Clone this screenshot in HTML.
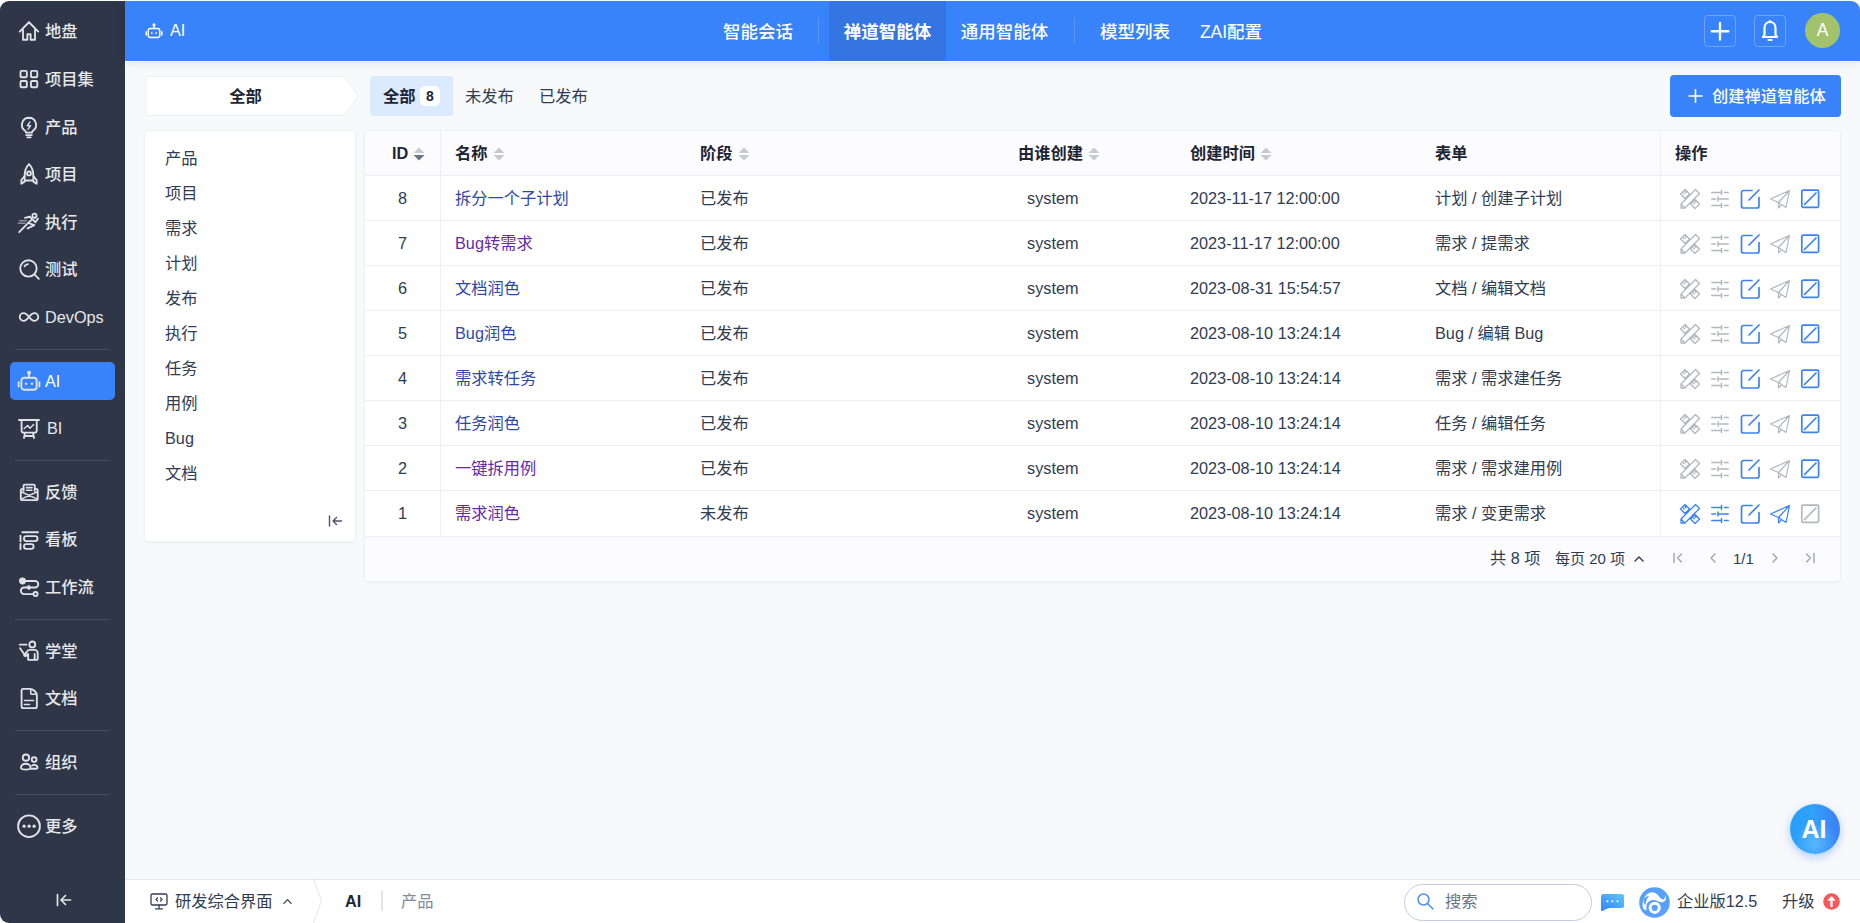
<!DOCTYPE html>
<html lang="zh-CN">
<head>
<meta charset="utf-8">
<title>AI</title>
<style>
*{box-sizing:border-box;margin:0;padding:0}
html,body{width:1860px;height:923px;overflow:hidden;background:#fff}
body{font-family:"Liberation Sans","Noto Sans CJK SC",sans-serif;color:#313c52;font-size:16.25px;position:relative}
svg{display:block}
#side{position:absolute;left:0;top:1px;width:125px;height:922px;background:#2f3648;border-radius:9px 0 0 9px}
.mi{position:absolute;left:10px;width:105px;height:38px;border-radius:5px;color:#e6e8ec;font-size:16.25px;font-weight:500}
.mi svg{position:absolute;left:7px;top:6px;width:24px;height:24px;fill:none;stroke:#e0e2e7;stroke-width:1.7;stroke-linecap:round;stroke-linejoin:round}
.mi span{position:absolute;left:35px;top:-1px;line-height:38px;white-space:nowrap}
.mi.en span{font-weight:normal}
.mi.act{color:#fff;background:#3883fa;margin-top:-1px}.mi.act span{margin-top:1px}.mi.act svg{margin-top:1px}
.dv{position:absolute;left:15px;width:95px;height:1px;background:#444c5f}
#head{position:absolute;left:125px;top:1px;width:1735px;height:60px;background:#3883fa;border-radius:0 9px 0 0;box-shadow:0 1px 0 #fff,0 2px 12px rgba(0,0,0,.10);z-index:2}
.nav{position:absolute;top:0;height:60px;line-height:62px;color:#fff;font-size:17.500px;font-weight:500;white-space:nowrap;text-align:center}
.nav.act{background:#3575e2;font-weight:bold}
.nd{position:absolute;top:17px;width:1px;height:25px;background:#5b98f8}
.hb{position:absolute;top:14px;width:32px;height:32px;border:1px solid #6ea4f9;border-radius:4px}
#main{position:absolute;left:125px;top:61px;width:1735px;height:818px;background:#f8f9fb}
#foot{position:absolute;left:125px;top:879px;width:1735px;height:44px;background:#fff;border-top:1px solid #e6e8ee;border-radius:0 0 10px 0}
.abs{position:absolute;white-space:nowrap}
#lp{position:absolute;left:145px;top:131px;width:210px;height:410px;background:#fff;border-radius:3px;box-shadow:0 0 0 1px #eef0f4,0 1px 3px rgba(0,0,0,.08)}
#lp div{position:absolute;left:20px;font-size:16.25px;line-height:20px;color:#313c52}
#tb{position:absolute;left:365px;top:131px;width:1475px;height:450px;background:#fcfcfe;border-radius:3px;box-shadow:0 0 0 1px #eef0f4,0 1px 3px rgba(0,0,0,.08)}
.row{position:absolute;left:0;width:1475px;height:45px;border-top:1px solid #edeff3;background:#fff}
.row div,.th div{position:absolute;top:0;line-height:44px;white-space:nowrap;font-size:16.25px}
.th{position:absolute;left:0;top:0;width:1475px;height:44px;font-weight:bold;color:#1d2534}
.vl{position:absolute;top:0;width:1px;height:405px;background:#edeff3}
a{color:#2d48a8;text-decoration:none}
a.v{color:#652aa5}
</style>
</head>
<body>
<div id="side">
<div class="mi" style="top:12px"><svg viewBox="0 0 22 22"><path d="M2.5 11.5 11 3l8.5 8.5M5.5 10v9h4v-5h3v5h4v-9"/></svg><span>地盘</span></div>
<div class="mi" style="top:60px"><svg viewBox="0 0 22 22"><rect x="3.200" y="3.600" width="5.800" height="5.800" rx="1"/><rect x="12.800" y="3.600" width="5.800" height="5.800" rx="1"/><rect x="3.200" y="12.800" width="5.800" height="5.800" rx="1"/><rect x="12.800" y="12.800" width="5.800" height="5.800" rx="1"/></svg><span>项目集</span></div>
<div class="mi" style="top:108px"><svg viewBox="0 0 22 22"><path d="M11 2.5a6.5 6.5 0 0 0-3.6 11.9c.6.5.9 1 .9 1.800h5.400c0-.8.300-1.300.9-1.800A6.500 6.500 0 0 0 11 2.500z"/><path d="M8.500 18.500h5M9.500 20.500h3"/><path d="M11.800 6.500 9.500 9.800h3L10.200 13" stroke-width="1.300"/></svg><span>产品</span></div>
<div class="mi" style="top:155px"><svg viewBox="0 0 22 22"><path d="M11 2c3 3 4 6.500 4 10.500V17H7v-4.500C7 8.500 8 5 11 2z"/><circle cx="11" cy="10.500" r="1.800"/><path d="M7 13l-3 3.500V20l3-2M15 13l3 3.500V20l-3-2"/></svg><span>项目</span></div>
<div class="mi" style="top:203px"><svg viewBox="0 0 22 22"><circle cx="16" cy="5.200" r="1.900"/><path d="M7.300 7.200l4.500-1 2.300 2.400-4 3.300 5.800 1.900-6.200 3.100M9.200 13 2 20.300M15.100 9.300l1.800 2 2.300-3.400"/><path d="M2.300 9.800h6.500M1.300 12.100h6" stroke="#8a8f9c" stroke-width="1.400"/></svg><span>执行</span></div>
<div class="mi" style="top:250px"><svg viewBox="0 0 22 22"><circle cx="10.500" cy="10.500" r="7.500"/><path d="M16 16l4 4M7 8.500a4 4 0 0 1 3-2"/></svg><span>测试</span></div>
<div class="mi en" style="top:298px"><svg viewBox="0 0 22 22"><path d="M11 11c-1.800-2.300-3-3.500-5-3.500a3.500 3.500 0 0 0 0 7c2 0 3.200-1.200 5-3.500zm0 0c1.800 2.300 3 3.500 5 3.500a3.500 3.500 0 0 0 0-7c-2 0-3.200 1.200-5 3.500z"/></svg><span>DevOps</span></div>
<div class="mi en act" style="top:362px"><svg viewBox="0 0 22 22"><rect x="4" y="8" width="14" height="11" rx="2.500"/><path d="M11 8V4.500M1.500 12v4M20.500 12v4"/><circle cx="11" cy="3.500" r="1" fill="#e0e2e7"/><circle cx="8.300" cy="13.500" r="1.100" fill="#e0e2e7" stroke="none"/><circle cx="13.700" cy="13.500" r="1.100" fill="#e0e2e7" stroke="none"/></svg><span>AI</span></div>
<div class="mi en" style="top:409px"><svg viewBox="0 0 22 22"><path d="M1.800 3.700h18.400M4.200 3.700v9.600a2 2 0 0 0 2 2h9.900a2 2 0 0 0 2-2V3.700M7.300 15.600l-.9 4.600M14.700 15.600l.9 4.600M6.900 18.300h8.200"/><path d="M6.600 11.500l3.200-2.800 2 2.500 3.500-3.500" stroke-width="1.300"/></svg><span style="left:37px">BI</span></div>
<div class="mi" style="top:473px"><svg viewBox="0 0 22 22"><path d="M6 10V5.200a1 1 0 0 1 1-1h8.300a1 1 0 0 1 1 1V10"/><path d="M8.700 7h5M8.700 9.400h5" stroke-width="1.400"/><path d="M6 8.100H5a1.500 1.500 0 0 0-1.500 1.500v7.300a1.500 1.500 0 0 0 1.500 1.500h12.500a1.500 1.500 0 0 0 1.500-1.500V9.600a1.500 1.500 0 0 0-1.500-1.500h-1.200"/><path d="M4.300 11l13.500 6M18.200 11 4.700 17" stroke-width="1.300"/></svg><span>反馈</span></div>
<div class="mi" style="top:520px"><svg viewBox="0 0 22 22"><path d="M4.800 4.800h14.500M3.200 8v5.200M3.200 15.500v4.800"/><rect x="6.400" y="8.300" width="12.400" height="4.600" rx="2.200"/><rect x="6.400" y="15.700" width="8.800" height="4.300" rx="2.100"/></svg><span>看板</span></div>
<div class="mi" style="top:568px"><svg viewBox="0 0 22 22"><circle cx="5" cy="5.500" r="2.300" fill="#e0e2e7"/><path d="M5 5.500h11.500a3 3 0 0 1 0 6H6.500a3 3 0 0 0 0 6H15"/><circle cx="17" cy="17.500" r="1.900"/><path d="M10.900 9.300l2.200 2.200-2.200 2.200-2.200-2.200z" fill="#e0e2e7" stroke-width=".5"/></svg><span>工作流</span></div>
<div class="mi" style="top:632px"><svg viewBox="0 0 22 22"><circle cx="14" cy="5" r="2.700"/><path d="M2.500 5.200h6.200"/><path d="M2.800 8.400l4.200 6c1.500-1.500 2.200-4.400 4.500-4.400h4.500a3 3 0 0 1 3 3v5a1.200 1.200 0 0 1-1.200 1.200H16.200v-5.500M16.200 19.100H10.200v-5.500l-1.700 1.700a1.500 1.500 0 0 1-2-.2"/></svg><span>学堂</span></div>
<div class="mi" style="top:679px"><svg viewBox="0 0 22 22"><path d="M5.700 2.700h5.800c3.500 0 6.700 3 6.700 6V18.800a1.500 1.500 0 0 1-1.500 1.500H5.700a1.500 1.500 0 0 1-1.500-1.500V4.200a1.500 1.500 0 0 1 1.500-1.500z"/><path d="M12.600 3v3.600a1 1 0 0 0 1 1h4M6.800 13.300h8.400M6.800 16.900h4.800" stroke-width="1.400"/></svg><span>文档</span></div>
<div class="mi" style="top:743px"><svg viewBox="0 0 22 22"><circle cx="8.200" cy="7" r="2.900"/><circle cx="15.700" cy="8.800" r="2.200"/><path d="M3.600 16.300c0-2.300 2-3.700 4.400-3.700s4.400 1.400 4.400 3.700c0 1.300-2.200 1.700-4.400 1.700s-4.400-.4-4.400-1.700z"/><path d="M13.800 14.200c.5-.3 1.200-.5 1.900-.5 1.800 0 3.100 1 3.100 2.500 0 .8-1.200 1-2.800 1h-3"/></svg><span>组织</span></div>
<div class="mi" style="top:807px"><svg viewBox="0 0 22 22"><circle cx="11" cy="11.200" r="10"/><circle cx="6.500" cy="11.200" r="1.500" fill="#e0e2e7" stroke="none"/><circle cx="11.100" cy="11.200" r="1.500" fill="#e0e2e7" stroke="none"/><circle cx="15.700" cy="11.200" r="1.500" fill="#e0e2e7" stroke="none"/></svg><span>更多</span></div>
<div class="dv" style="top:348px"></div>
<div class="dv" style="top:459px"></div>
<div class="dv" style="top:618px"></div>
<div class="dv" style="top:729px"></div>
<div class="dv" style="top:793px"></div>
<svg class="abs" style="left:55.500px;top:892px" width="16" height="14" viewBox="0 0 16 14" fill="none" stroke="#dfe2e8" stroke-width="1.700" stroke-linecap="round" stroke-linejoin="round"><path d="M1.500 1.500v11M14.500 7H5.500M9.500 2.500 5 7l4.500 4.500"/></svg></div>
<div id="head"><svg class="abs" style="left:20px;top:21px" width="18" height="18" viewBox="0 0 22 22" fill="none" stroke="#fff" stroke-width="1.800" stroke-linecap="round" stroke-linejoin="round"><rect x="4" y="8" width="14" height="11" rx="2.500"/><path d="M11 8V4.500M1.500 12v4M20.500 12v4"/><circle cx="11" cy="3.500" r="1" fill="#fff"/><circle cx="8.300" cy="13.500" r="1.100" fill="#fff" stroke="none"/><circle cx="13.700" cy="13.500" r="1.100" fill="#fff" stroke="none"/></svg><div class="abs" style="left:45px;top:-1px;line-height:60px;color:#fff;font-size:16.25px">AI</div><div class="nav" style="left:584px;width:98px">智能会话</div><div class="nav act" style="left:704px;width:117px">禅道智能体</div><div class="nav" style="left:821px;width:117px">通用智能体</div><div class="nav" style="left:961px;width:98px">模型列表</div><div class="nav" style="left:1059px;width:94px">ZAI配置</div><div class="nd" style="left:693px"></div><div class="nd" style="left:949px"></div><div class="hb" style="left:1579px"><svg width="30" height="30" viewBox="0 0 30 30" stroke="#fff" stroke-width="2.400" stroke-linecap="round"><path d="M15 7v16.500M6.800 15.200h16.500"/></svg></div><div class="hb" style="left:1629px"><svg width="30" height="30" viewBox="0.500 0.500 30 30" fill="none" stroke="#fff" stroke-width="2.200" stroke-linecap="round" stroke-linejoin="round"><path d="M15.500 6.500c-3.300 0-5.500 2.500-5.500 6v7l-1.500 2h14l-1.500-2v-7c0-3.500-2.200-6-5.500-6zM14 24.500h3M15.500 5.500v1"/></svg></div><div class="abs" style="left:1680px;top:12px;width:35px;height:35px;border-radius:18px;background:#a3c26c;color:#fff;font-size:17.500px;text-align:center;line-height:35px">A</div></div>
<div id="main"></div>
<svg class="abs" style="left:145px;top:76px" width="216" height="40" viewBox="0 0 216 40"><path d="M0.500 2.500a2 2 0 0 1 2-2H199.500l14 19.500L199.500 39.500H2.500a2 2 0 0 1-2-2z" fill="#fff" stroke="#eceef2" stroke-width="1"/></svg><div class="abs" style="left:145px;top:77px;width:201px;height:38px;line-height:38px;text-align:center;font-weight:bold;color:#1d2534;font-size:16.25px">全部</div><div class="abs" style="left:370px;top:76px;width:83px;height:40px;border-radius:3px;background:#dbeafe"></div><div class="abs" style="left:383px;top:76px;line-height:40px;font-weight:bold;color:#1d2534">全部</div><div class="abs" style="left:420px;top:86px;width:20px;height:20px;border-radius:5px;background:#fff;text-align:center;line-height:20px;font-size:14px;font-weight:bold;color:#1d2534">8</div><div class="abs" style="left:465px;top:76px;line-height:40px;color:#313c52">未发布</div><div class="abs" style="left:539px;top:76px;line-height:40px;color:#313c52">已发布</div><div class="abs" style="left:1670px;top:75px;width:171px;height:42px;border-radius:4px;background:#3883fa"></div><svg class="abs" style="left:1688px;top:89px" width="15" height="14" viewBox="0 0 15 14" stroke="#fff" stroke-width="1.600" stroke-linecap="round"><path d="M7.500 0.800v12.400M1 7h13"/></svg><div class="abs" style="left:1712px;top:75px;line-height:42px;color:#fff;font-size:16.25px;font-weight:500">创建禅道智能体</div><div id="lp"><div style="top:17px">产品</div><div style="top:52px">项目</div><div style="top:87px">需求</div><div style="top:122px">计划</div><div style="top:157px">发布</div><div style="top:192px">执行</div><div style="top:227px">任务</div><div style="top:262px">用例</div><div style="top:297px">Bug</div><div style="top:332px">文档</div><svg class="abs" style="left:183px;top:384px" width="15" height="12" viewBox="0 0 15 12" fill="none" stroke="#4a5568" stroke-width="1.400" stroke-linecap="round" stroke-linejoin="round"><path d="M1.500 1v10M13.500 6H5M8.500 2.500 5 6l3.500 3.500"/></svg></div><div id="tb"><div class="th"><div style="left:27px">ID</div><svg class="abs" style="left:48px;top:16px" width="12" height="14" viewBox="0 0 12 14"><path d="M6 0.500 11.500 6H0.500z" fill="#c8cad1"/><path d="M6 13.500 11.500 8H0.500z" fill="#6b7280"/></svg><div style="left:90px">名称</div><svg class="abs" style="left:128px;top:16px" width="12" height="14" viewBox="0 0 12 14"><path d="M6 0.500 11.500 6H0.500z" fill="#c8cad1"/><path d="M6 13.500 11.500 8H0.500z" fill="#c8cad1"/></svg><div style="left:335px">阶段</div><svg class="abs" style="left:373px;top:16px" width="12" height="14" viewBox="0 0 12 14"><path d="M6 0.500 11.500 6H0.500z" fill="#c8cad1"/><path d="M6 13.500 11.500 8H0.500z" fill="#c8cad1"/></svg><div style="left:653px">由谁创建</div><svg class="abs" style="left:723px;top:16px" width="12" height="14" viewBox="0 0 12 14"><path d="M6 0.500 11.500 6H0.500z" fill="#c8cad1"/><path d="M6 13.500 11.500 8H0.500z" fill="#c8cad1"/></svg><div style="left:825px">创建时间</div><svg class="abs" style="left:895px;top:16px" width="12" height="14" viewBox="0 0 12 14"><path d="M6 0.500 11.500 6H0.500z" fill="#c8cad1"/><path d="M6 13.500 11.500 8H0.500z" fill="#c8cad1"/></svg><div style="left:1070px">表单</div><div style="left:1310px">操作</div></div><div class="row" style="top:44px"><div style="left:0;width:75px;text-align:center">8</div><div style="left:90px"><a class="">拆分一个子计划</a></div><div style="left:335px">已发布</div><div style="left:662px">system</div><div style="left:825px">2023-11-17 12:00:00</div><div style="left:1070px">计划 / 创建子计划</div><svg class="abs" style="left:1314px;top:12px" width="22" height="22" viewBox="0 0 22 22" fill="none" stroke="#b4b7bf" stroke-width="1.300" stroke-linejoin="round"><path d="M16.500 1.500 20.500 5.500 6 20H2v-4zM2 16l4 4M6 1.500 1.500 6 6 10.500 10.500 6zM16 11.500 11.500 16 16 20.500 20.500 16zM4.200 4.800l1.500 1.500M5.800 3.200l1.500 1.500M14.200 14.800l1.500 1.500M15.800 13.200l1.500 1.500"/></svg><svg class="abs" style="left:1344px;top:12px" width="22" height="22" viewBox="0 0 22 22" fill="none" stroke="#b4b7bf" stroke-width="1.500" stroke-linecap="round"><path d="M2.800 4.500h8.700M15.500 4.500h3.700M12.500 2.500v4M2.800 11h3.700M10 11h9.200M9 9v4M2.800 17.500h8.700M15.500 17.500h3.700M12.500 15.500v4"/></svg><svg class="abs" style="left:1374px;top:12px" width="22" height="22" viewBox="0 0 22 22" fill="none" stroke="#3b82f6" stroke-width="1.700" stroke-linecap="round" stroke-linejoin="round"><path d="M13 2.500H4.500a2 2 0 0 0-2 2V18a2 2 0 0 0 2 2H18a2 2 0 0 0 2-2V9.500M20 2 10 12"/></svg><svg class="abs" style="left:1404px;top:12px" width="22" height="22" viewBox="0 0 22 22" fill="none" stroke="#b4b7bf" stroke-width="1.200" stroke-linejoin="round"><path d="M20.500 2.500 1.500 11l8 3.500zM20.500 2.500 17 19.500 9.500 14.500zM9.500 14.500v5.500l3-3.500"/></svg><svg class="abs" style="left:1434px;top:12px" width="22" height="22" viewBox="0 0 22 22" fill="none" stroke="#3b82f6" stroke-width="1.700" stroke-linecap="round" stroke-linejoin="round"><rect x="2.800" y="2.200" width="16.800" height="17.200" rx="1.300"/><path d="M17 5 5.500 16.500"/></svg></div><div class="row" style="top:89px"><div style="left:0;width:75px;text-align:center">7</div><div style="left:90px"><a class="v">Bug转需求</a></div><div style="left:335px">已发布</div><div style="left:662px">system</div><div style="left:825px">2023-11-17 12:00:00</div><div style="left:1070px">需求 / 提需求</div><svg class="abs" style="left:1314px;top:12px" width="22" height="22" viewBox="0 0 22 22" fill="none" stroke="#b4b7bf" stroke-width="1.300" stroke-linejoin="round"><path d="M16.500 1.500 20.500 5.500 6 20H2v-4zM2 16l4 4M6 1.500 1.500 6 6 10.500 10.500 6zM16 11.500 11.500 16 16 20.500 20.500 16zM4.200 4.800l1.500 1.500M5.800 3.200l1.500 1.500M14.200 14.800l1.500 1.500M15.800 13.200l1.500 1.500"/></svg><svg class="abs" style="left:1344px;top:12px" width="22" height="22" viewBox="0 0 22 22" fill="none" stroke="#b4b7bf" stroke-width="1.500" stroke-linecap="round"><path d="M2.800 4.500h8.700M15.500 4.500h3.700M12.500 2.500v4M2.800 11h3.700M10 11h9.200M9 9v4M2.800 17.500h8.700M15.500 17.500h3.700M12.500 15.500v4"/></svg><svg class="abs" style="left:1374px;top:12px" width="22" height="22" viewBox="0 0 22 22" fill="none" stroke="#3b82f6" stroke-width="1.700" stroke-linecap="round" stroke-linejoin="round"><path d="M13 2.500H4.500a2 2 0 0 0-2 2V18a2 2 0 0 0 2 2H18a2 2 0 0 0 2-2V9.500M20 2 10 12"/></svg><svg class="abs" style="left:1404px;top:12px" width="22" height="22" viewBox="0 0 22 22" fill="none" stroke="#b4b7bf" stroke-width="1.200" stroke-linejoin="round"><path d="M20.500 2.500 1.500 11l8 3.500zM20.500 2.500 17 19.500 9.500 14.500zM9.500 14.500v5.500l3-3.500"/></svg><svg class="abs" style="left:1434px;top:12px" width="22" height="22" viewBox="0 0 22 22" fill="none" stroke="#3b82f6" stroke-width="1.700" stroke-linecap="round" stroke-linejoin="round"><rect x="2.800" y="2.200" width="16.800" height="17.200" rx="1.300"/><path d="M17 5 5.500 16.500"/></svg></div><div class="row" style="top:134px"><div style="left:0;width:75px;text-align:center">6</div><div style="left:90px"><a class="">文档润色</a></div><div style="left:335px">已发布</div><div style="left:662px">system</div><div style="left:825px">2023-08-31 15:54:57</div><div style="left:1070px">文档 / 编辑文档</div><svg class="abs" style="left:1314px;top:12px" width="22" height="22" viewBox="0 0 22 22" fill="none" stroke="#b4b7bf" stroke-width="1.300" stroke-linejoin="round"><path d="M16.500 1.500 20.500 5.500 6 20H2v-4zM2 16l4 4M6 1.500 1.500 6 6 10.500 10.500 6zM16 11.500 11.500 16 16 20.500 20.500 16zM4.200 4.800l1.500 1.500M5.800 3.200l1.500 1.500M14.200 14.800l1.500 1.500M15.800 13.200l1.500 1.500"/></svg><svg class="abs" style="left:1344px;top:12px" width="22" height="22" viewBox="0 0 22 22" fill="none" stroke="#b4b7bf" stroke-width="1.500" stroke-linecap="round"><path d="M2.800 4.500h8.700M15.500 4.500h3.700M12.500 2.500v4M2.800 11h3.700M10 11h9.200M9 9v4M2.800 17.500h8.700M15.500 17.500h3.700M12.500 15.500v4"/></svg><svg class="abs" style="left:1374px;top:12px" width="22" height="22" viewBox="0 0 22 22" fill="none" stroke="#3b82f6" stroke-width="1.700" stroke-linecap="round" stroke-linejoin="round"><path d="M13 2.500H4.500a2 2 0 0 0-2 2V18a2 2 0 0 0 2 2H18a2 2 0 0 0 2-2V9.500M20 2 10 12"/></svg><svg class="abs" style="left:1404px;top:12px" width="22" height="22" viewBox="0 0 22 22" fill="none" stroke="#b4b7bf" stroke-width="1.200" stroke-linejoin="round"><path d="M20.500 2.500 1.500 11l8 3.500zM20.500 2.500 17 19.500 9.500 14.500zM9.500 14.500v5.500l3-3.500"/></svg><svg class="abs" style="left:1434px;top:12px" width="22" height="22" viewBox="0 0 22 22" fill="none" stroke="#3b82f6" stroke-width="1.700" stroke-linecap="round" stroke-linejoin="round"><rect x="2.800" y="2.200" width="16.800" height="17.200" rx="1.300"/><path d="M17 5 5.500 16.500"/></svg></div><div class="row" style="top:179px"><div style="left:0;width:75px;text-align:center">5</div><div style="left:90px"><a class="">Bug润色</a></div><div style="left:335px">已发布</div><div style="left:662px">system</div><div style="left:825px">2023-08-10 13:24:14</div><div style="left:1070px">Bug / 编辑 Bug</div><svg class="abs" style="left:1314px;top:12px" width="22" height="22" viewBox="0 0 22 22" fill="none" stroke="#b4b7bf" stroke-width="1.300" stroke-linejoin="round"><path d="M16.500 1.500 20.500 5.500 6 20H2v-4zM2 16l4 4M6 1.500 1.500 6 6 10.500 10.500 6zM16 11.500 11.500 16 16 20.500 20.500 16zM4.200 4.800l1.500 1.500M5.800 3.200l1.500 1.500M14.200 14.800l1.500 1.500M15.800 13.200l1.500 1.500"/></svg><svg class="abs" style="left:1344px;top:12px" width="22" height="22" viewBox="0 0 22 22" fill="none" stroke="#b4b7bf" stroke-width="1.500" stroke-linecap="round"><path d="M2.800 4.500h8.700M15.500 4.500h3.700M12.500 2.500v4M2.800 11h3.700M10 11h9.200M9 9v4M2.800 17.500h8.700M15.500 17.500h3.700M12.500 15.500v4"/></svg><svg class="abs" style="left:1374px;top:12px" width="22" height="22" viewBox="0 0 22 22" fill="none" stroke="#3b82f6" stroke-width="1.700" stroke-linecap="round" stroke-linejoin="round"><path d="M13 2.500H4.500a2 2 0 0 0-2 2V18a2 2 0 0 0 2 2H18a2 2 0 0 0 2-2V9.500M20 2 10 12"/></svg><svg class="abs" style="left:1404px;top:12px" width="22" height="22" viewBox="0 0 22 22" fill="none" stroke="#b4b7bf" stroke-width="1.200" stroke-linejoin="round"><path d="M20.500 2.500 1.500 11l8 3.500zM20.500 2.500 17 19.500 9.500 14.500zM9.500 14.500v5.500l3-3.500"/></svg><svg class="abs" style="left:1434px;top:12px" width="22" height="22" viewBox="0 0 22 22" fill="none" stroke="#3b82f6" stroke-width="1.700" stroke-linecap="round" stroke-linejoin="round"><rect x="2.800" y="2.200" width="16.800" height="17.200" rx="1.300"/><path d="M17 5 5.500 16.500"/></svg></div><div class="row" style="top:224px"><div style="left:0;width:75px;text-align:center">4</div><div style="left:90px"><a class="">需求转任务</a></div><div style="left:335px">已发布</div><div style="left:662px">system</div><div style="left:825px">2023-08-10 13:24:14</div><div style="left:1070px">需求 / 需求建任务</div><svg class="abs" style="left:1314px;top:12px" width="22" height="22" viewBox="0 0 22 22" fill="none" stroke="#b4b7bf" stroke-width="1.300" stroke-linejoin="round"><path d="M16.500 1.500 20.500 5.500 6 20H2v-4zM2 16l4 4M6 1.500 1.500 6 6 10.500 10.500 6zM16 11.500 11.500 16 16 20.500 20.500 16zM4.200 4.800l1.500 1.500M5.800 3.200l1.500 1.500M14.200 14.800l1.500 1.500M15.800 13.200l1.500 1.500"/></svg><svg class="abs" style="left:1344px;top:12px" width="22" height="22" viewBox="0 0 22 22" fill="none" stroke="#b4b7bf" stroke-width="1.500" stroke-linecap="round"><path d="M2.800 4.500h8.700M15.500 4.500h3.700M12.500 2.500v4M2.800 11h3.700M10 11h9.200M9 9v4M2.800 17.500h8.700M15.500 17.500h3.700M12.500 15.500v4"/></svg><svg class="abs" style="left:1374px;top:12px" width="22" height="22" viewBox="0 0 22 22" fill="none" stroke="#3b82f6" stroke-width="1.700" stroke-linecap="round" stroke-linejoin="round"><path d="M13 2.500H4.500a2 2 0 0 0-2 2V18a2 2 0 0 0 2 2H18a2 2 0 0 0 2-2V9.500M20 2 10 12"/></svg><svg class="abs" style="left:1404px;top:12px" width="22" height="22" viewBox="0 0 22 22" fill="none" stroke="#b4b7bf" stroke-width="1.200" stroke-linejoin="round"><path d="M20.500 2.500 1.500 11l8 3.500zM20.500 2.500 17 19.500 9.500 14.500zM9.500 14.500v5.500l3-3.500"/></svg><svg class="abs" style="left:1434px;top:12px" width="22" height="22" viewBox="0 0 22 22" fill="none" stroke="#3b82f6" stroke-width="1.700" stroke-linecap="round" stroke-linejoin="round"><rect x="2.800" y="2.200" width="16.800" height="17.200" rx="1.300"/><path d="M17 5 5.500 16.500"/></svg></div><div class="row" style="top:269px"><div style="left:0;width:75px;text-align:center">3</div><div style="left:90px"><a class="">任务润色</a></div><div style="left:335px">已发布</div><div style="left:662px">system</div><div style="left:825px">2023-08-10 13:24:14</div><div style="left:1070px">任务 / 编辑任务</div><svg class="abs" style="left:1314px;top:12px" width="22" height="22" viewBox="0 0 22 22" fill="none" stroke="#b4b7bf" stroke-width="1.300" stroke-linejoin="round"><path d="M16.500 1.500 20.500 5.500 6 20H2v-4zM2 16l4 4M6 1.500 1.500 6 6 10.500 10.500 6zM16 11.500 11.500 16 16 20.500 20.500 16zM4.200 4.800l1.500 1.500M5.800 3.200l1.500 1.500M14.200 14.800l1.500 1.500M15.800 13.200l1.500 1.500"/></svg><svg class="abs" style="left:1344px;top:12px" width="22" height="22" viewBox="0 0 22 22" fill="none" stroke="#b4b7bf" stroke-width="1.500" stroke-linecap="round"><path d="M2.800 4.500h8.700M15.500 4.500h3.700M12.500 2.500v4M2.800 11h3.700M10 11h9.200M9 9v4M2.800 17.500h8.700M15.500 17.500h3.700M12.500 15.500v4"/></svg><svg class="abs" style="left:1374px;top:12px" width="22" height="22" viewBox="0 0 22 22" fill="none" stroke="#3b82f6" stroke-width="1.700" stroke-linecap="round" stroke-linejoin="round"><path d="M13 2.500H4.500a2 2 0 0 0-2 2V18a2 2 0 0 0 2 2H18a2 2 0 0 0 2-2V9.500M20 2 10 12"/></svg><svg class="abs" style="left:1404px;top:12px" width="22" height="22" viewBox="0 0 22 22" fill="none" stroke="#b4b7bf" stroke-width="1.200" stroke-linejoin="round"><path d="M20.500 2.500 1.500 11l8 3.500zM20.500 2.500 17 19.500 9.500 14.500zM9.500 14.500v5.500l3-3.500"/></svg><svg class="abs" style="left:1434px;top:12px" width="22" height="22" viewBox="0 0 22 22" fill="none" stroke="#3b82f6" stroke-width="1.700" stroke-linecap="round" stroke-linejoin="round"><rect x="2.800" y="2.200" width="16.800" height="17.200" rx="1.300"/><path d="M17 5 5.500 16.500"/></svg></div><div class="row" style="top:314px"><div style="left:0;width:75px;text-align:center">2</div><div style="left:90px"><a class="v">一键拆用例</a></div><div style="left:335px">已发布</div><div style="left:662px">system</div><div style="left:825px">2023-08-10 13:24:14</div><div style="left:1070px">需求 / 需求建用例</div><svg class="abs" style="left:1314px;top:12px" width="22" height="22" viewBox="0 0 22 22" fill="none" stroke="#b4b7bf" stroke-width="1.300" stroke-linejoin="round"><path d="M16.500 1.500 20.500 5.500 6 20H2v-4zM2 16l4 4M6 1.500 1.500 6 6 10.500 10.500 6zM16 11.500 11.500 16 16 20.500 20.500 16zM4.200 4.800l1.500 1.500M5.800 3.200l1.500 1.500M14.200 14.800l1.500 1.500M15.800 13.200l1.500 1.500"/></svg><svg class="abs" style="left:1344px;top:12px" width="22" height="22" viewBox="0 0 22 22" fill="none" stroke="#b4b7bf" stroke-width="1.500" stroke-linecap="round"><path d="M2.800 4.500h8.700M15.500 4.500h3.700M12.500 2.500v4M2.800 11h3.700M10 11h9.200M9 9v4M2.800 17.500h8.700M15.500 17.500h3.700M12.500 15.500v4"/></svg><svg class="abs" style="left:1374px;top:12px" width="22" height="22" viewBox="0 0 22 22" fill="none" stroke="#3b82f6" stroke-width="1.700" stroke-linecap="round" stroke-linejoin="round"><path d="M13 2.500H4.500a2 2 0 0 0-2 2V18a2 2 0 0 0 2 2H18a2 2 0 0 0 2-2V9.500M20 2 10 12"/></svg><svg class="abs" style="left:1404px;top:12px" width="22" height="22" viewBox="0 0 22 22" fill="none" stroke="#b4b7bf" stroke-width="1.200" stroke-linejoin="round"><path d="M20.500 2.500 1.500 11l8 3.500zM20.500 2.500 17 19.500 9.500 14.500zM9.500 14.500v5.500l3-3.500"/></svg><svg class="abs" style="left:1434px;top:12px" width="22" height="22" viewBox="0 0 22 22" fill="none" stroke="#3b82f6" stroke-width="1.700" stroke-linecap="round" stroke-linejoin="round"><rect x="2.800" y="2.200" width="16.800" height="17.200" rx="1.300"/><path d="M17 5 5.500 16.500"/></svg></div><div class="row" style="top:359px;height:46px"><div style="left:0;width:75px;text-align:center">1</div><div style="left:90px"><a class="v">需求润色</a></div><div style="left:335px">未发布</div><div style="left:662px">system</div><div style="left:825px">2023-08-10 13:24:14</div><div style="left:1070px">需求 / 变更需求</div><svg class="abs" style="left:1314px;top:12px" width="22" height="22" viewBox="0 0 22 22" fill="none" stroke="#3b82f6" stroke-width="1.300" stroke-linejoin="round"><path d="M16.500 1.500 20.500 5.500 6 20H2v-4zM2 16l4 4M6 1.500 1.500 6 6 10.500 10.500 6zM16 11.500 11.500 16 16 20.500 20.500 16zM4.200 4.800l1.500 1.500M5.800 3.200l1.500 1.500M14.200 14.800l1.500 1.500M15.800 13.200l1.500 1.500"/></svg><svg class="abs" style="left:1344px;top:12px" width="22" height="22" viewBox="0 0 22 22" fill="none" stroke="#3b82f6" stroke-width="1.500" stroke-linecap="round"><path d="M2.800 4.500h8.700M15.500 4.500h3.700M12.500 2.500v4M2.800 11h3.700M10 11h9.200M9 9v4M2.800 17.500h8.700M15.500 17.500h3.700M12.500 15.500v4"/></svg><svg class="abs" style="left:1374px;top:12px" width="22" height="22" viewBox="0 0 22 22" fill="none" stroke="#3b82f6" stroke-width="1.700" stroke-linecap="round" stroke-linejoin="round"><path d="M13 2.500H4.500a2 2 0 0 0-2 2V18a2 2 0 0 0 2 2H18a2 2 0 0 0 2-2V9.500M20 2 10 12"/></svg><svg class="abs" style="left:1404px;top:12px" width="22" height="22" viewBox="0 0 22 22" fill="none" stroke="#3b82f6" stroke-width="1.200" stroke-linejoin="round"><path d="M20.500 2.500 1.500 11l8 3.500zM20.500 2.500 17 19.500 9.500 14.500zM9.500 14.500v5.500l3-3.500"/></svg><svg class="abs" style="left:1434px;top:12px" width="22" height="22" viewBox="0 0 22 22" fill="none" stroke="#b4b7bf" stroke-width="1.700" stroke-linecap="round" stroke-linejoin="round"><rect x="2.800" y="2.200" width="16.800" height="17.200" rx="1.300"/><path d="M17 5 5.500 16.500"/></svg></div><div class="row" style="top:405px;background:none"></div><div class="vl" style="left:75px"></div><div class="vl" style="left:1295px"></div><div class="abs" style="left:1125px;top:405px;line-height:45px;font-size:16.25px;color:#313c52">共 8 项</div><div class="abs" style="left:1190px;top:405px;line-height:45px;font-size:15px;color:#313c52">每页 20 项</div><svg class="abs" style="left:1268px;top:422px" width="12" height="12" viewBox="0 0 12 12" fill="none" stroke="#313c52" stroke-width="1.400" stroke-linecap="round" stroke-linejoin="round"><path d="M2 8 6 4l4 4"/></svg><svg class="abs" style="left:1307px;top:421px" width="12" height="12" viewBox="0 0 12 12" fill="none" stroke="#9ea3b0" stroke-width="1.400" stroke-linecap="round" stroke-linejoin="round"><path d="M2 1.500v9M9.500 2 5.500 6l4 4"/></svg><svg class="abs" style="left:1342px;top:421px" width="12" height="12" viewBox="0 0 12 12" fill="none" stroke="#9ea3b0" stroke-width="1.400" stroke-linecap="round" stroke-linejoin="round"><path d="M8 2 4 6l4 4"/></svg><div class="abs" style="left:1368px;top:405px;line-height:45px;font-size:15px;color:#313c52">1/1</div><svg class="abs" style="left:1404px;top:421px" width="12" height="12" viewBox="0 0 12 12" fill="none" stroke="#9ea3b0" stroke-width="1.400" stroke-linecap="round" stroke-linejoin="round"><path d="M4 2l4 4-4 4"/></svg><svg class="abs" style="left:1439px;top:421px" width="12" height="12" viewBox="0 0 12 12" fill="none" stroke="#9ea3b0" stroke-width="1.400" stroke-linecap="round" stroke-linejoin="round"><path d="M10 1.500v9M2.500 2l4 4-4 4"/></svg></div><div class="abs" style="left:1790px;top:804px;width:50px;height:50px;border-radius:25px;background:radial-gradient(circle at 50% 78%,rgba(88,182,253,.95) 0%,rgba(88,182,253,0) 48%),linear-gradient(90deg,#279efb 0%,#30a1fb 45%,#3d7ef8 100%);box-shadow:0 3px 10px rgba(59,130,246,.38);color:#fff;font-weight:bold;font-size:25px;line-height:51px;text-align:center;text-indent:-2px">AI</div>
<div id="foot"><svg class="abs" style="left:25px;top:13px" width="18" height="17" viewBox="0 0 18 17" fill="none" stroke="#313c52" stroke-width="1.300" stroke-linecap="round" stroke-linejoin="round"><rect x="1" y="1" width="16" height="11" rx="1.500"/><path d="M9 12v3.500M5.500 15.800h7M7.500 5 6 6.500 7.500 8M10.500 5 12 6.500 10.500 8"/></svg><div class="abs" style="left:50px;top:0;line-height:42px;font-size:16.25px;color:#313c52">研发综合界面</div><svg class="abs" style="left:157px;top:16px" width="11" height="11" viewBox="0 0 12 12" fill="none" stroke="#313c52" stroke-width="1.400" stroke-linecap="round" stroke-linejoin="round"><path d="M2 8 6 4l4 4"/></svg><svg class="abs" style="left:186px;top:-1px" width="14" height="44" viewBox="0 0 14 44" fill="none" stroke="#e3e5ea" stroke-width="1"><path d="M2.500 0 10.500 22 2.500 44"/></svg><div class="abs" style="left:220px;top:0;line-height:42px;font-size:16.25px;font-weight:bold;color:#1d2534">AI</div><div class="abs" style="left:256px;top:11px;width:2px;height:20px;background:#e3e5ea"></div><div class="abs" style="left:276px;top:0;line-height:42px;font-size:16.25px;color:#838a9d">产品</div><div class="abs" style="left:1279px;top:4px;width:188px;height:37px;border-radius:18.500px;border:1px solid #c5cbe2;background:#fff"></div><svg class="abs" style="left:1291px;top:12px" width="19" height="19" viewBox="0 0 19 19" fill="none" stroke="#4d90f7" stroke-width="1.500" stroke-linecap="round"><circle cx="7.500" cy="7.500" r="5.500"/><path d="M11.700 11.700 17 17"/></svg><div class="abs" style="left:1320px;top:0;line-height:43px;font-size:16.25px;color:#6b7385">搜索</div><svg class="abs" style="left:1476px;top:13.800px" width="23.300" height="17.200" viewBox="0 0 23.300 17.200"><defs><linearGradient id="cg" x1="0" y1="1" x2="1" y2="0"><stop offset="0" stop-color="#3482fb"/><stop offset="1" stop-color="#5cc8fe"/></linearGradient></defs><path d="M2.800 0h17.700a2.800 2.800 0 0 1 2.800 2.800v8.400a2.800 2.800 0 0 1-2.800 2.800H10C6.500 14 4 15.800 1.600 17c-.8.400-1.600-.1-1.600-1V2.800A2.800 2.800 0 0 1 2.800 0z" fill="url(#cg)"/><circle cx="6.400" cy="7.200" r="1" fill="#fff"/><circle cx="11.300" cy="7.200" r="1" fill="#fff"/><circle cx="16.600" cy="7.200" r="1" fill="#fff"/></svg><svg class="abs" style="left:1514px;top:7px" width="31" height="31" viewBox="0 0 31 31"><circle cx="15.500" cy="15.500" r="15.300" fill="#57a0fd"/><path d="M4.200 21.800C2.600 16 4.300 9.500 9.500 6.300 13 4.200 17 5.500 19.500 8.800c1.700 2.200 2.800 3.800 4.500 3.600 1.600-.2 2.300-2.100 2.300-4.400 1.300 3.500.3 6.600-2.500 7.200-2.800.6-4.800-1.300-7.800-2-3.500-.8-6.500.7-8 3.700-1 2-.8 4.600-.2 6.300-1.600-.4-2.800-.6-3.600-1.400z" fill="#fff"/><path d="M4.600 12.500c1.200-2.600 3.400-3.600 5.300-3.100-2.200 1.900-3.500 5-3.200 8.800-1.500-1.200-2.700-3.400-2.100-5.700z" fill="#57a0fd"/><circle cx="15.700" cy="20.800" r="4.600" fill="none" stroke="#fff" stroke-width="3"/></svg><div class="abs" style="left:1552px;top:0;line-height:43px;font-size:16.25px;color:#313c52">企业版12.5</div><div class="abs" style="left:1657px;top:0;line-height:43px;font-size:16.25px;color:#313c52">升级</div><svg class="abs" style="left:1698px;top:13px" width="17" height="17" viewBox="0 0 17 17"><circle cx="8.500" cy="8.500" r="8.300" fill="#fb5558"/><path d="M8.500 3 12.300 7.600H9.500v5.400a1 1 0 0 1-2 0V7.600H4.700z" fill="#fff" stroke="#fff" stroke-width=".4" stroke-linejoin="round"/></svg></div>
</body>
</html>
